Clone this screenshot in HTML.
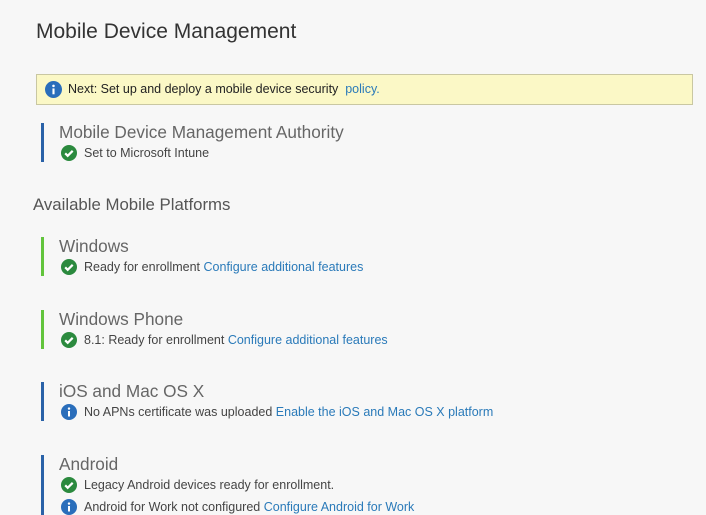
<!DOCTYPE html>
<html><head><meta charset="utf-8"><style>
body{margin:0;width:706px;height:507px;overflow:hidden;background:#f7f7f7;font-family:"Liberation Sans",sans-serif;position:relative}
.a{position:absolute;white-space:nowrap}
.t{left:36px;top:20px;font-size:21px;color:#333}
.ban{left:36px;top:74px;width:655px;height:29px;background:#fbf8c6;border:1px solid #c9c7a2}
.bar{position:absolute;left:41px;width:3px}
.h{font-size:17.2px;color:#666;left:59px}
.s{font-size:12.5px;color:#444;left:84px}
.s a,.ban a{color:#2a7ab9;text-decoration:none}
.ic{position:absolute;left:61px;width:16px;height:16px}
</style></head><body>
<div class="a t">Mobile Device Management</div>
<div class="a ban"><svg style="position:absolute;left:8px;top:6px" width="17" height="17" viewBox="0 0 16 16"><circle cx="8" cy="8" r="8" fill="#2a6ebb"/><rect x="7" y="7" width="2" height="5.5" fill="#fff"/><circle cx="8" cy="4.6" r="1.2" fill="#fff"/></svg><span style="position:absolute;left:31px;top:7px;font-size:12.5px;color:#222">Next: Set up and deploy a mobile device security&nbsp;&nbsp;<a>policy.</a></span></div>

<div class="bar" style="top:123px;height:39px;background:#2a62a8"></div>
<div class="a h" style="top:122px">Mobile Device Management Authority</div>
<svg class="ic" style="top:145px" viewBox="0 0 16 16"><circle cx="8" cy="8" r="8" fill="#2b8a3e"/><path d="M4.2 8.3l2.5 2.5 5-5" stroke="#fff" stroke-width="2.2" fill="none"/></svg>
<div class="a s" style="top:146px">Set to Microsoft Intune</div>

<div class="a" style="left:33px;top:195px;font-size:16.8px;color:#555">Available Mobile Platforms</div>

<div class="bar" style="top:237px;height:39px;background:#62c43c"></div>
<div class="a h" style="top:236px">Windows</div>
<svg class="ic" style="top:259px" viewBox="0 0 16 16"><circle cx="8" cy="8" r="8" fill="#2b8a3e"/><path d="M4.2 8.3l2.5 2.5 5-5" stroke="#fff" stroke-width="2.2" fill="none"/></svg>
<div class="a s" style="top:260px">Ready for enrollment <a>Configure additional features</a></div>

<div class="bar" style="top:310px;height:39px;background:#62c43c"></div>
<div class="a h" style="top:309px">Windows Phone</div>
<svg class="ic" style="top:332px" viewBox="0 0 16 16"><circle cx="8" cy="8" r="8" fill="#2b8a3e"/><path d="M4.2 8.3l2.5 2.5 5-5" stroke="#fff" stroke-width="2.2" fill="none"/></svg>
<div class="a s" style="top:333px">8.1: Ready for enrollment <a>Configure additional features</a></div>

<div class="bar" style="top:382px;height:39px;background:#2a62a8"></div>
<div class="a h" style="top:381px">iOS and Mac OS X</div>
<svg class="ic" style="top:404px" viewBox="0 0 16 16"><circle cx="8" cy="8" r="8" fill="#2a6ebb"/><rect x="7" y="7" width="2" height="5.5" fill="#fff"/><circle cx="8" cy="4.6" r="1.2" fill="#fff"/></svg>
<div class="a s" style="top:405px">No APNs certificate was uploaded <a>Enable the iOS and Mac OS X platform</a></div>

<div class="bar" style="top:455px;height:60px;background:#2a62a8"></div>
<div class="a h" style="top:454px">Android</div>
<svg class="ic" style="top:477px" viewBox="0 0 16 16"><circle cx="8" cy="8" r="8" fill="#2b8a3e"/><path d="M4.2 8.3l2.5 2.5 5-5" stroke="#fff" stroke-width="2.2" fill="none"/></svg>
<div class="a s" style="top:478px">Legacy Android devices ready for enrollment.</div>
<svg class="ic" style="top:499px" viewBox="0 0 16 16"><circle cx="8" cy="8" r="8" fill="#2a6ebb"/><rect x="7" y="7" width="2" height="5.5" fill="#fff"/><circle cx="8" cy="4.6" r="1.2" fill="#fff"/></svg>
<div class="a s" style="top:500px">Android for Work not configured <a>Configure Android for Work</a></div>
</body></html>
